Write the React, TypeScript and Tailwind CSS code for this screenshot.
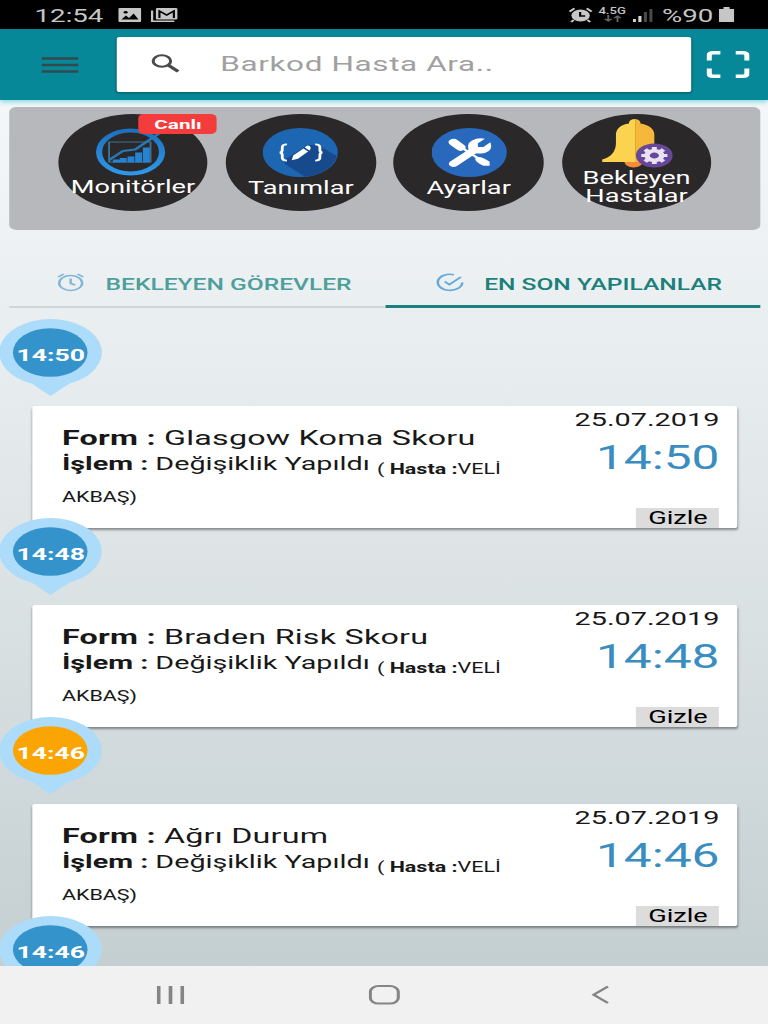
import type {ReactNode} from 'react';

interface Task {
  time: string;
  form: string;
  pending?: boolean;
}

const tasks: Task[] = [
  {time: '14:50', form: 'Glasgow Koma Skoru'},
  {time: '14:48', form: 'Braden Risk Skoru'},
  {time: '14:46', form: 'Ağrı Durum', pending: true},
];

function StatusBar() {
  return (
    <div className="flex h-[29px] shrink-0 items-center bg-black pl-[22.5px] pr-[22px] text-[18px] leading-none text-[#c6c6c6]">
      <span className="w-[54px] pt-[2px]">12:54</span>
      <svg className="h-[14px] w-[15px]" viewBox="0 0 15 14">
        <rect width="15" height="14" rx="1" fill="#c6c6c6" />
        <path d="M2 11.5 5 7.5 7 10 10 5.5 13.2 11.5Z" fill="#000" />
        <circle cx="4.8" cy="4.2" r="1.3" fill="#000" />
      </svg>
      <svg className="ml-[6px] h-[16px] w-[18px]" viewBox="0 0 18 16" fill="none">
        <path d="M1 3.5V14.2H15.5" stroke="#c6c6c6" strokeWidth="1.5" />
        <rect x="3.5" y="1" width="14" height="11.5" rx="1" fill="#c6c6c6" />
        <path d="M5.8 11V4L10.5 8 15.2 4V11" stroke="#000" strokeWidth="1.4" />
      </svg>
      <svg className="ml-auto h-[16px] w-[16px]" viewBox="0 0 16 16" fill="none">
        <circle cx="8" cy="8.5" r="6" fill="#c6c6c6" />
        <path d="M.8 4.6 4 1.4M15.2 4.6 12 1.4M3.5 13 1.8 15M12.5 13 14.2 15" stroke="#c6c6c6" strokeWidth="1.6" />
        <path d="M7.7 5V9H11" stroke="#000" strokeWidth="1.4" />
      </svg>
      <span className="ml-[4.5px] flex w-[17px] flex-col items-center">
        <span className="text-[8.5px] font-medium leading-[8px]">4.5G</span>
        <svg className="h-[7px] w-[12px]" viewBox="0 0 12 7" fill="none" stroke="#666" strokeWidth="1.2">
          <path d="M3 0V6M.8 3.8 3 6 5.2 3.8M9 7V1M6.8 3.2 9 1 11.2 3.2" />
        </svg>
      </span>
      <svg className="ml-[5px] h-[14px] w-[13px]" viewBox="0 0 13 14">
        <path d="M0 11h2v3H0zM3.6 8h2v6h-2z" fill="#d5d5d5" />
        <path d="M7.2 4h2v10h-2zM10.8 1h2v13h-2z" fill="#4a4a4a" />
      </svg>
      <span className="ml-[6px] w-[34px] whitespace-nowrap pt-[2px]">%90</span>
      <svg className="ml-[3px] h-[15px] w-[10px]" viewBox="0 0 10 15">
        <path d="M3 0h4v2h3v13H0V2h3z" fill="#c6c6c6" />
      </svg>
    </div>
  );
}

function Header() {
  return (
    <div className="flex h-[71px] shrink-0 items-center bg-[#078898] pl-[26.5px] shadow-[0_2px_4px_rgba(120,215,222,0.9)]">
      <svg className="h-[18px] w-[24.5px]" viewBox="0 0 24.5 18">
        <path d="M0 2.5H24.5M0 9H24.5M0 15.5H24.5" stroke="#35494d" strokeWidth="2.4" />
      </svg>
      <div className="ml-[25.4px] flex h-[55px] w-[374px] items-center rounded-[2px] bg-white pl-[22px] shadow-[0_1px_2px_rgba(0,0,0,0.35)]">
        <svg className="mb-[3px] h-[19px] w-[19px]" viewBox="0 0 19 19" fill="none" stroke="#4a4a4a">
          <circle cx="7.4" cy="7" r="5.7" strokeWidth="2" />
          <path d="M11.4 11 18 17.5" strokeWidth="2.6" />
        </svg>
        <span className="ml-[26px] text-[20.5px] tracking-[0.4px] text-[#a0a0a0]">Barkod Hasta Ara..</span>
      </div>
      <svg className="ml-[9.6px] h-[27px] w-[28px]" viewBox="0 0 28 27" fill="none" stroke="#fff" strokeWidth="3.4">
        <path d="M1.7 9.5V4.5Q1.7 1.7 4.5 1.7H9M19 1.7H23.5Q26.3 1.7 26.3 4.5V9.5M26.3 17.5V22.5Q26.3 25.3 23.5 25.3H19M9 25.3H4.5Q1.7 25.3 1.7 22.5V17.5" />
      </svg>
    </div>
  );
}

function MonitorIcon() {
  return (
    <svg className="mr-[4px] h-[48px] w-[46px]" viewBox="0 0 46 48" fill="none">
      <defs>
        <linearGradient id="ring" x1="0" y1="0" x2="0" y2="1">
          <stop offset="0" stopColor="#1d70c0" />
          <stop offset="1" stopColor="#2f97e8" />
        </linearGradient>
      </defs>
      <ellipse cx="23" cy="24" rx="20.5" ry="21.5" stroke="url(#ring)" strokeWidth="4" />
      <path d="M9 34V14H36V34Z" stroke="#3d7397" strokeWidth="1.2" />
      <path d="M12 34v-2h3.5v2zM16.5 34v-3.5H20v3.5zM21.5 34v-5H25v5zM26.5 34v-9H30v9zM31.5 34V20H35v14z" fill="#2683d2" stroke="#2683d2" />
      <path d="M9 32 18 23 26 21.5 43 4" stroke="#2878b4" strokeWidth="2" />
    </svg>
  );
}

function CodeIcon() {
  return (
    <svg className="h-[49px] w-[49px]" viewBox="0 0 48 48" fill="none">
      <circle cx="24" cy="24" r="24" fill="#1d66b2" />
      <path d="M14 31 29 16.5 36 17.5 47.2 27.5A24 24 0 0 1 27 47.8L14 35Z" fill="#164a8c" />
      <path
        d="M15.5 16Q12.5 16 12.5 19V21.5Q12.5 24 10.8 24 12.5 24 12.5 26.5V29Q12.5 32 15.5 32M33.5 16Q36.5 16 36.5 19V21.5Q36.5 24 38.2 24 36.5 24 36.5 26.5V29Q36.5 32 33.5 32"
        stroke="#fff"
        strokeWidth="1.8"
      />
      <path d="M18.5 31.5 19.5 27 26 20 29 23 22.5 30Z" fill="#fff" />
      <path d="M26.8 19 28.5 17.2Q31 17.5 30.5 20.5L29.8 22Z" fill="#fff" />
    </svg>
  );
}

function ToolsIcon() {
  return (
    <svg className="h-[49px] w-[49px]" viewBox="0 0 48 48" fill="none">
      <circle cx="24" cy="24" r="24" fill="#2869bd" />
      <path d="M14 14 18.5 19" stroke="#fff" strokeWidth="6.5" strokeLinecap="round" />
      <path d="M19 19 33 33" stroke="#fff" strokeWidth="2" />
      <path d="M28 29Q31 26.5 37 33V37H33Q27 33 28 29Z" fill="#fff" />
      <path d="M14 35 28 21" stroke="#fff" strokeWidth="6" strokeLinecap="round" />
      <path d="M34 10.5 29.5 15V18.5H33L37.5 14Q39.5 22 34 24.5 25 26.5 23.5 21 22 13 28.5 10.5 31 9.5 34 10.5Z" fill="#fff" />
    </svg>
  );
}

function BellIcon() {
  return (
    <svg className="ml-[2px] h-[50px] w-[46px]" viewBox="0 0 46 50" fill="none">
      <circle cx="20.5" cy="42.5" r="6" fill="#f58a3c" />
      <path d="M0 43V40.5Q8.5 37 9 25V16Q9 6.5 17.5 4.5V3.5Q18 0 21.5 0V43Z" fill="#fbd34f" />
      <path d="M21.5 0Q25 .5 25 4.5 34 7 34 16V30L30 43H21.5Z" fill="#f5b83a" />
      <circle cx="34" cy="36.5" r="12" fill="#674797" />
      <path d="M34 28V45M25.5 36.5H42.5M28 30.5 40 42.5M40 30.5 28 42.5" stroke="#e8e2f3" strokeWidth="3.2" />
      <circle cx="34" cy="36.5" r="4.8" fill="#674797" stroke="#e8e2f3" strokeWidth="3.6" />
    </svg>
  );
}

interface MenuCircleProps {
  icon: ReactNode;
  label: ReactNode;
  badge?: string;
  raised?: boolean;
}

function MenuCircle({icon, label, badge, raised}: MenuCircleProps) {
  return (
    <div
      className={`relative flex h-[97px] w-[97.6px] flex-col items-center rounded-full bg-[#2a2828] text-center text-[17.7px] text-white ${
        raised ? 'pt-[5px] leading-[18px]' : 'pt-[14px] leading-[22px]'
      }`}
    >
      {icon}
      <span className="whitespace-nowrap">{label}</span>
      {badge && (
        <span className="absolute -right-[6px] top-0 flex h-[20px] w-[51px] items-center justify-center rounded-[4px] bg-[#f43c3c] text-[13.5px] font-bold">
          {badge}
        </span>
      )}
    </div>
  );
}

function Tabs() {
  return (
    <div className="ml-[6px] mr-[5px] mt-[31px] flex h-[47px] shrink-0 text-[16px] font-medium">
      <div className="flex w-[244.6px] items-center border-b-2 border-[#d0d6d8] pl-[31px] text-[#4d9f9c]">
        <svg className="mb-[3px] h-[20px] w-[18px]" viewBox="0 0 18 20" fill="none" stroke="#83b6da" strokeWidth="1.6">
          <circle cx="9" cy="11" r="7.5" />
          <path d="M9 6.5V11.5L12 13M.8 5 4.5 2M17.2 5 13.5 2" />
        </svg>
        <span className="ml-[13.7px] whitespace-nowrap pt-[2px]">BEKLEYEN GÖREVLER</span>
      </div>
      <div className="flex flex-1 items-center border-b-[3px] border-[#1c807f] pl-[33.6px] text-[#1b7f7c]">
        <svg className="mb-[3px] h-[20px] w-[18px]" viewBox="0 0 18 20" fill="none" stroke="#66aadd" strokeWidth="1.7">
          <path d="M11.5 2.7A8 8 0 1 0 17 10.5M5.5 9.5 8.5 12.5 16 5" />
        </svg>
        <span className="ml-[13px] whitespace-nowrap pt-[3px]">EN SON YAPILANLAR</span>
      </div>
    </div>
  );
}

function Pin({time, pending}: {time: string; pending?: boolean}) {
  return (
    <div className="relative h-[77px] w-[67px] shrink-0">
      <svg className="h-[77px] w-[67px]" viewBox="0 0 67 77">
        <path d="M32.9 0A33.5 33.5 0 0 1 45 64.7L32.9 77 20.8 64.7A33.5 33.5 0 0 1 32.9 0Z" fill="#addcfa" />
        <circle cx="32.7" cy="33.5" r="24.3" fill={pending ? '#fba505' : '#3593cc'} />
      </svg>
      <span className="absolute inset-x-0 top-[26px] -ml-px text-center text-[17.3px] font-bold leading-[20px] text-white">
        {time}
      </span>
    </div>
  );
}

function TaskCard({time, form}: Task) {
  return (
    <div className="ml-[20.8px] mt-[10px] flex h-[122px] w-[459.6px] shrink-0 justify-between rounded-[2px] bg-white pl-[19.5px] pr-[12px] text-[#181818] shadow-[0_2px_2px_rgba(0,0,0,0.4)]">
      <div className="whitespace-nowrap pt-[19px]">
        <div className="h-[26px] text-[21px] leading-[26px] tracking-[0.15px]">
          <b>Form :</b> {form}
        </div>
        <div className="h-[27px] text-[18.7px] leading-[27px]">
          <b>İşlem :</b> Değişiklik Yapıldı{' '}
          <span className="align-[-4px] text-[14px] leading-none">
            ( <b>Hasta :</b>VELİ
          </span>
        </div>
        <div className="mt-[9px] text-[14px] leading-[21px]">AKBAŞ)</div>
      </div>
      <div className="flex flex-col items-end pt-[4px]">
        <span className="text-[18.8px] leading-[20px]">25.07.2019</span>
        <span className="mt-[8px] text-[32.3px] leading-[40px] text-[#3a8dc0]">{time}</span>
        <span className="mt-auto flex h-[20px] w-[54px] items-center justify-center bg-[#dcdcdc] text-[17.7px] text-black">
          Gizle
        </span>
      </div>
    </div>
  );
}

function NavBar() {
  return (
    <div className="flex h-[58px] shrink-0 items-center bg-[#f1f1f1] pl-[101.5px]">
      <svg className="h-[20px] w-[18px]" viewBox="0 0 18 20" stroke="#858585" strokeWidth="2.4">
        <path d="M1.3 1V19M9 1V19M16.7 1V19" />
      </svg>
      <svg className="ml-[120.5px] h-[20px] w-[21px]" viewBox="0 0 21 20">
        <rect x="1.1" y="1.1" width="18.2" height="17.5" rx="5.5" fill="none" stroke="#858585" strokeWidth="2" />
      </svg>
      <svg className="ml-[124px] h-[20px] w-[12px]" viewBox="0 0 12 20" fill="none" stroke="#858585" strokeWidth="2">
        <path d="M10.8 1.5 1.5 9.8 10.8 18" />
      </svg>
    </div>
  );
}

export default function App() {
  return (
    <div className="h-[1024px] w-[768px] overflow-hidden">
      {/* 500 units wide, widened to the display's aspect */}
      <div className="flex h-[1024px] w-[500px] origin-top-left scale-x-[1.536] flex-col font-[Roboto,sans-serif]">
        <StatusBar />
        <div className="flex min-h-0 flex-1 flex-col overflow-hidden bg-linear-to-b from-[#f8fafb] via-[#e1e7e9] to-[#c4cfd1]">
          <Header />
          <div className="ml-[6px] mr-[5px] mt-[7px] flex h-[123px] shrink-0 gap-[11.7px] rounded-[5px] bg-[#b7b8bc] pl-[31.8px] pt-[7px]">
            <MenuCircle icon={<MonitorIcon />} label="Monitörler" badge="Canlı" />
            <MenuCircle icon={<CodeIcon />} label="Tanımlar" />
            <MenuCircle icon={<ToolsIcon />} label="Ayarlar" />
            <MenuCircle icon={<BellIcon />} label={<>Bekleyen<br />Hastalar</>} raised />
          </div>
          <Tabs />
          <div className="mt-[11px] flex flex-col">
            {tasks.map((task) => (
              <div key={task.time} className="-mb-[10px] flex flex-col">
                <Pin time={task.time} pending={task.pending} />
                <TaskCard {...task} />
              </div>
            ))}
            <Pin time="14:46" />
          </div>
        </div>
        <NavBar />
      </div>
    </div>
  );
}
